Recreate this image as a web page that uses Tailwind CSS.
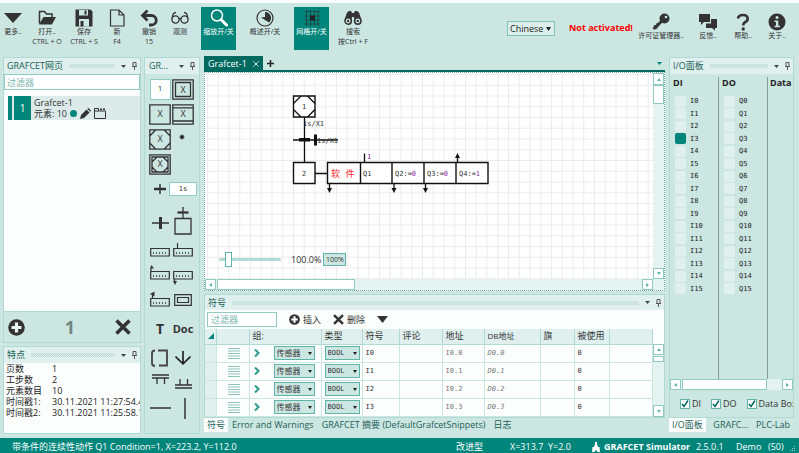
<!DOCTYPE html>
<html lang="zh">

<head>
    <meta charset="UTF-8">
    <meta name="viewport" content="width=device-width, initial-scale=1.0">
    <script src="https://cdn.jsdelivr.net/npm/@tailwindcss/browser@4"></script>
    <title>GRAFCET Simulator</title>
</head>

<body class="h-screen flex flex-col overflow-hidden bg-[#cce6e2] border-t-[3px] border-[#fafdfd] font-['Open_Sans','Noto_Sans_CJK_SC',sans-serif] text-[9px] leading-3 text-[#333]">

    <!-- Toolbar -->
    <header class="h-[54px] shrink-0 flex items-start pt-1 pr-1 text-[7px] leading-[10px] whitespace-nowrap">
        <button class="w-[26px] h-[43px] pt-[2px] flex flex-col items-center">
            <svg class="w-[18px] h-[18px]" viewBox="0 0 18 18"><path d="M0 4h18L9 14z" fill="#333" /></svg>
            <span>更多..</span>
        </button>
        <button class="w-[42px] h-[43px] pt-[2px] flex flex-col items-center">
            <svg class="w-[18px] h-[18px]" viewBox="0 0 18 18"><path d="M1.500 14.500V2.500h5l2 2.500h5.500v3" fill="none" stroke="#333" stroke-width="1.500" /><path d="M5.500 8H18l-4 7.500H1z" fill="#333" /></svg>
            <span>打开..</span>
            <span>CTRL + O</span>
        </button>
        <button class="w-8 h-[43px] pt-[2px] flex flex-col items-center">
            <svg class="w-[18px] h-[18px]" viewBox="0 0 18 18"><path d="M.5.5h15l2 2v15H.5z" fill="#333" /><path d="M4 1h9v5.500H4zM4 10h10v7.500H4z" fill="#cce6e2" /><path d="M9.500 1.500h2v4h-2zM5.500 12h3v5.500h-3z" fill="#333" /></svg>
            <span>保存</span>
            <span>CTRL + S</span>
        </button>
        <button class="w-[34px] h-[43px] pt-[2px] flex flex-col items-center">
            <svg class="w-[18px] h-[18px]" viewBox="0 0 18 18"><path d="M2.500 1h8.500l5 5v11h-13.500zM11 1v5h5" fill="none" stroke="#333" stroke-width="1.200" /></svg>
            <span>新</span>
            <span>F4</span>
        </button>
        <button class="w-[30px] h-[43px] pt-[2px] flex flex-col items-center">
            <svg class="w-[18px] h-[18px]" viewBox="0 0 18 18"><path d="M7.500 1.500L2.500 6.500l5 5M2.500 6.500h9a4.500 4.500 0 0 1 0 9.500H9" fill="none" stroke="#333" stroke-width="2.800" /></svg>
            <span>撤销</span>
            <span>15</span>
        </button>
        <button class="w-8 h-[43px] pt-[2px] mr-[5px] flex flex-col items-center">
            <svg class="w-[18px] h-[18px]" viewBox="0 0 18 18"><g fill="none" stroke="#333" stroke-width="1.300"><circle cx="4.500" cy="10.500" r="3.600" /><circle cx="13.500" cy="10.500" r="3.600" /><path d="M7.800 10q1.200-1 2.400 0M1.200 9.500Q1.500 3.500 5 3.500M16.800 9.500Q16.500 3.500 13 3.500" /></g></svg>
            <span>观测</span>
        </button>
        <button class="w-[35px] h-[43px] pt-[2px] flex flex-col items-center bg-[#00857a] text-white">
            <svg class="w-[18px] h-[18px]" viewBox="0 0 18 18"><circle cx="7" cy="6.500" r="5.500" fill="none" stroke="#fff" stroke-width="1.500" /><path d="M11.500 11l5 5" stroke="#fff" stroke-width="3" stroke-linecap="round" /></svg>
            <span>缩放开/关</span>
        </button>
        <button class="w-[58px] h-[43px] pt-[2px] flex flex-col items-center">
            <svg class="w-[18px] h-[18px]" viewBox="0 0 18 18"><circle cx="9" cy="9" r="8" fill="none" stroke="#333" stroke-width="1.200" /><path d="M9 3a6 6 0 0 1 4 10.500L5 8.500l4-.5z" fill="#333" /></svg>
            <span>概述开/关</span>
        </button>
        <button class="w-[35px] h-[43px] pt-[2px] flex flex-col items-center bg-[#00857a] text-white">
            <svg class="w-[18px] h-[18px]" viewBox="0 0 18 18"><path d="M3.500 1v16M7.500 1v16M11.500 1v16M15 1v16M1.500 2.500H17M1.500 7H17M1.500 11H17M1.500 15H17" stroke="#1d4f4a" stroke-width="1" fill="none" /><path d="M7 6.500h5v5H7z" fill="#222" /></svg>
            <span>网格开/关</span>
        </button>
        <button class="w-12 h-[43px] pt-[2px] flex flex-col items-center">
            <svg class="w-[18px] h-[18px]" viewBox="0 0 18 18"><path d="M3 3.500L5 2h2l1 2h2l1-2h2l2 1.500L17.500 11h-7L10 8H8l-.5 3H.5z" fill="#333" /><g fill="#cce6e2" stroke="#333" stroke-width="1.500"><circle cx="4.200" cy="12" r="3.200" /><circle cx="13.800" cy="12" r="3.200" /></g><circle cx="4.200" cy="12" r="1.200" fill="#333" /><circle cx="13.800" cy="12" r="1.200" fill="#333" /></svg>
            <span>搜索</span>
            <span>按Ctrl + F</span>
        </button>

        <div class="ml-auto flex items-start pt-1">
            <div class="relative mt-[10px]">
                <select aria-label="Language" class="appearance-none w-12 h-[15px] pl-[2px] border border-[#7fc4bb] bg-[#dcefec] text-[9px] leading-3 text-[#222]">
                    <option>Chinese</option>
                </select>
                <svg class="absolute right-1 top-[6px] w-[5px] h-1 pointer-events-none" viewBox="0 0 5 4"><path d="M0 0h5L2.500 4z" fill="#222" /></svg>
            </div>
            <strong class="w-[60px] ml-[14px] mr-1 mt-[11px] text-[9px] leading-3 text-[#fe0000]">Not activated!</strong>
            <button class="w-14 flex flex-col items-center pt-[2px]">
                <svg class="w-[18px] h-[18px]" viewBox="0 0 18 18"><path d="M10.500 7.500L1.500 16" stroke="#333" stroke-width="3" /><path d="M2 12.500l3.500 3M4.500 10.500l2.500 2.500" stroke="#333" stroke-width="1.500" /><circle cx="12.500" cy="5.500" r="5" fill="#333" /><circle cx="14" cy="4" r="1.300" fill="#cce6e2" /></svg>
                <span>许可证管理器..</span>
            </button>
            <button class="w-[38px] flex flex-col items-center pt-[2px]">
                <svg class="w-[18px] h-[18px]" viewBox="0 0 18 18"><path d="M0 1h11v8H5l-3 3V9H0z" fill="#333" /><path d="M12 6h6v9h-2v2.500L13 15H7v-4.500h5z" fill="#333" /></svg>
                <span>反馈..</span>
            </button>
            <button class="w-8 flex flex-col items-center pt-[2px]">
                <svg class="w-[18px] h-[18px]" viewBox="0 0 18 18"><path d="M4 5.500Q4.500 2 9 2t4.700 3.700Q13.700 8 11 9.200 9.200 10 9.200 12.500" fill="none" stroke="#333" stroke-width="2.600" /><circle cx="9.200" cy="16" r="1.700" fill="#333" /></svg>
                <span>帮助..</span>
            </button>
            <button class="w-9 flex flex-col items-center pt-[2px]">
                <svg class="w-[18px] h-[18px]" viewBox="0 0 18 18"><circle cx="9" cy="9" r="8.500" fill="#333" /><circle cx="9" cy="4.500" r="1.500" fill="#cce6e2" /><path d="M6.500 7.500h3.800v5.300H12v1.400H6.500v-1.400H8V9H6.500z" fill="#cce6e2" /></svg>
                <span>关于..</span>
            </button>
        </div>
    </header>

    <main class="flex-1 min-h-0 flex gap-[3px] pl-[3px] pr-[5px] pb-1">

        <!-- Pages and properties -->
        <aside class="w-[138px] shrink-0 flex flex-col">
            <section class="flex-1 min-h-0 flex flex-col border border-[#b2dad4]">
                <div class="h-4 flex items-center gap-[6px] px-[3px] bg-[#dff0ee]">
                    <h2 class="text-[#1c5f58]">GRAFCET网页</h2>
                    <div class="flex-1 h-1 bg-[repeating-conic-gradient(#b9d8d4_0_25%,transparent_0_50%)] bg-[length:2px_2px]"></div>
                    <button aria-label="Menu"><svg class="w-[5px] h-[3px]" viewBox="0 0 5 3"><path d="M0 0h5L2.500 3z" fill="#444" /></svg></button>
                    <button aria-label="Pin"><svg class="w-[5px] h-2" viewBox="0 0 5 8"><path d="M1 .5h3v4H1zM0 4.500h5M2.500 5v3" fill="none" stroke="#555" /></svg></button>
                </div>
                <input type="text" aria-label="过滤器" placeholder="过滤器" class="h-4 px-[2px] border border-[#8fcbc3] bg-white placeholder:text-[#7ab5ad]">
                <div class="flex-1 bg-[#fcfefe] pt-[6px] pl-1">
                    <a href="#" class="h-6 flex items-center bg-[#dcebe9]">
                        <span class="w-1 h-full bg-[#00857a]"></span>
                        <span class="w-[17px] h-full ml-[2px] bg-[#00857a] text-white text-[10px] flex items-center justify-center">1</span>
                        <span class="ml-[3px] leading-[11px]">
                            <span class="block">Grafcet-1</span>
                            <span class="flex items-center gap-[3px]">元素: 10
                                <svg class="w-[7px] h-[7px]" viewBox="0 0 7 7"><circle cx="3.500" cy="3.500" r="3.500" fill="#00857a" /></svg>
                                <svg class="w-[11px] h-[11px]" viewBox="0 0 11 11"><path d="M0 11l1-4 5.500-5.500 3 3L4 10zM7.300.8L8.500 0 11 2.500l-.8 1.200z" fill="#333" /></svg>
                                <svg class="w-3 h-[11px]" viewBox="0 0 12 11"><path d="M.5 3V.5h4V3h7v7.500H.5V3h4" fill="none" stroke="#333" /><path d="M6 .5h2v1.500H6zM9 .5h2v1.500H9z" fill="#333" /></svg>
                            </span>
                        </span>
                    </a>
                </div>
                <div class="h-[31px] flex items-center justify-between px-1 border-t border-[#b2dad4]">
                    <button aria-label="Add page"><svg class="w-[17px] h-[17px]" viewBox="0 0 17 17"><circle cx="8.500" cy="8.500" r="8.300" fill="#333" /><path d="M8.500 3.500v10M3.500 8.500h10" stroke="#e8f4f2" stroke-width="3.200" /></svg></button>
                    <span class="text-[18px] leading-5 font-bold text-[#6f8682]">1</span>
                    <button aria-label="Delete page" class="pr-[5px]"><svg class="w-4 h-4" viewBox="0 0 16 16"><path d="M1.500 1.500l13 13M14.500 1.500l-13 13" stroke="#333" stroke-width="3.600" /></svg></button>
                </div>
            </section>

            <section class="h-[88px] shrink-0 mt-[3px] flex flex-col border border-[#b2dad4] bg-[#fcfefe]">
                <div class="h-4 flex items-center gap-[6px] px-[3px] bg-[#dff0ee]">
                    <h2 class="text-[#1c5f58]">特点</h2>
                    <div class="flex-1 h-1 bg-[repeating-conic-gradient(#b9d8d4_0_25%,transparent_0_50%)] bg-[length:2px_2px]"></div>
                    <button aria-label="Menu"><svg class="w-[5px] h-[3px]" viewBox="0 0 5 3"><path d="M0 0h5L2.500 3z" fill="#444" /></svg></button>
                    <button aria-label="Pin"><svg class="w-[5px] h-2" viewBox="0 0 5 8"><path d="M1 .5h3v4H1zM0 4.500h5M2.500 5v3" fill="none" stroke="#555" /></svg></button>
                </div>
                <dl class="grid grid-cols-[46px_1fr] pl-[2px] leading-[11px] whitespace-nowrap overflow-hidden text-[#222]">
                    <dt>页数</dt><dd>1</dd>
                    <dt>工步数</dt><dd>2</dd>
                    <dt>元素数目</dt><dd>10</dd>
                    <dt>时间戳1:</dt><dd>30.11.2021 11:27:54.4</dd>
                    <dt>时间戳2:</dt><dd>30.11.2021 11:25:58.1</dd>
                </dl>
            </section>
        </aside>

        <!-- Element palette -->
        <aside class="w-14 shrink-0 flex flex-col border border-[#b2dad4]">
            <div class="h-4 flex items-center gap-[6px] px-1 bg-[#dff0ee]">
                <h2 class="flex-1 text-[#1c5f58]">GR...</h2>
                <button aria-label="Menu"><svg class="w-[5px] h-[3px]" viewBox="0 0 5 3"><path d="M0 0h5L2.500 3z" fill="#444" /></svg></button>
                <button aria-label="Pin"><svg class="w-[5px] h-2" viewBox="0 0 5 8"><path d="M1 .5h3v4H1zM0 4.500h5M2.500 5v3" fill="none" stroke="#555" /></svg></button>
            </div>
            <div class="grid grid-cols-[22px_24px] grid-rows-[25px_25px_25px_25px_23px_41px_21px_26px_24px_34px_24px_24px_28px] place-items-center pt-[3px] pl-1 justify-start text-[#333]">
                <input type="text" value="1" aria-label="Step number" class="w-[21px] h-[21px] border border-[#8fcbc3] bg-white text-center text-[8px] pb-1">
                <button><svg class="w-[22px] h-[21px]" viewBox="0 0 22 21"><path d="M.8.8h20.400v19.400H.8zM3.500 3.500h15v14h-15z" fill="none" stroke="#333" stroke-width="1.300" /><text x="11" y="14" text-anchor="middle" font-size="9" fill="#333">X</text></svg></button>
                <button><svg class="w-[22px] h-[21px]" viewBox="0 0 22 21"><path d="M.8.8h20.400v19.400H.8z" fill="none" stroke="#333" stroke-width="1.300" /><text x="11" y="13" text-anchor="middle" font-size="9" fill="#333">X</text></svg></button>
                <button><svg class="w-[22px] h-[21px]" viewBox="0 0 22 21"><path d="M.8.8h20.400v19.400H.8zM.8 3.800h20.400M.8 17h20.400" fill="none" stroke="#333" stroke-width="1.300" /><text x="11" y="13" text-anchor="middle" font-size="9" fill="#333">X</text></svg></button>
                <button><svg class="w-[22px] h-[21px]" viewBox="0 0 22 21"><path d="M.8.8h20.400v19.400H.8zM.8 7l6-6.200M15 .8L21.200 7M.8 14l6 6.200M15 20.200l6.200-6.200" fill="none" stroke="#333" stroke-width="1.300" /><text x="11" y="13" text-anchor="middle" font-size="9" fill="#333">X</text></svg></button>
                <button><svg class="w-[22px] h-[21px]" viewBox="0 0 22 21"><path d="M10 5.500v5M7.800 6.800l4.400 2.400M12.200 6.800L7.800 9.200" stroke="#222" stroke-width="1.300" /></svg></button>
                <button><svg class="w-[22px] h-[21px]" viewBox="0 0 22 21"><path d="M.8.8h20.400v19.400H.8zM3 3h16v15H3zM3 8l5-5M14 3l5 5M3 13l5 5M14 18l5-5" fill="none" stroke="#333" stroke-width="1.300" /><text x="11" y="13" text-anchor="middle" font-size="9" fill="#333">X</text></svg></button>
                <span></span>
                <button><svg class="w-3 h-3" viewBox="0 0 12 12"><path d="M6 1v10" stroke="#333" stroke-width="1.500" /><path d="M0 6h12" stroke="#333" stroke-width="2.500" /></svg></button>
                <input type="text" value="1s" aria-label="Transition" class="w-7 h-[14px] border border-[#8fcbc3] bg-white text-center text-[7px] font-['DejaVu_Sans_Mono',monospace]">
                <button><svg class="w-[17px] h-3 mt-1" viewBox="0 0 17 12"><path d="M0 6h17" stroke="#333" stroke-width="1.500" /><path d="M8.500 0v12" stroke="#333" stroke-width="3" /></svg></button>
                <button><svg class="w-[18px] h-7" viewBox="0 0 18 28"><path d="M1 11.500h16v15.500H1zM9 0v11" fill="none" stroke="#333" stroke-width="1.300" /><path d="M3.500 5.500h11" stroke="#333" stroke-width="2.300" /></svg></button>
                <button><svg class="w-5 h-[18px]" viewBox="0 0 20 18"><path d="M.7 5.500h18.600v7.500H.7z" fill="none" stroke="#333" stroke-width="1.200" /><path d="M3 10h14" stroke="#333" stroke-width="1.500" stroke-dasharray="1 2" /></svg></button>
                <button><svg class="w-5 h-[18px]" viewBox="0 0 20 18"><path d="M.7 5.500h18.600v7.500H.7zM4.500 0v5" fill="none" stroke="#333" stroke-width="1.200" /><path d="M3 10h14" stroke="#333" stroke-width="1.500" stroke-dasharray="1 2" /></svg></button>
                <button><svg class="w-5 h-5" viewBox="0 0 20 20"><path d="M.7 6.500h18.600V14H.7zM1 6V3" fill="none" stroke="#333" stroke-width="1.200" /><path d="M0 3.500L1.500 0 4 3.500z" fill="#333" /><path d="M3 11h14" stroke="#333" stroke-width="1.500" stroke-dasharray="1 2" /></svg></button>
                <button><svg class="w-5 h-5" viewBox="0 0 20 20"><path d="M.7 6.500h18.600V14H.7zM1.500 14v3" fill="none" stroke="#333" stroke-width="1.200" /><path d="M0 16h4l-2 4z" fill="#333" /><path d="M3 11h14" stroke="#333" stroke-width="1.500" stroke-dasharray="1 2" /></svg></button>
                <button><svg class="w-5 h-[18px]" viewBox="0 0 20 18"><path d="M.7 7.500h18.600V15H.7zM2.500 7V3" fill="none" stroke="#333" stroke-width="1.200" /><path d="M0 3l4.500-2.500v5z" fill="#333" /><path d="M3 12h14" stroke="#333" stroke-width="1.500" stroke-dasharray="1 2" /></svg></button>
                <button><svg class="w-[18px] h-3" viewBox="0 0 18 12"><path d="M.7.7h16.600v10.600H.7zM3.500 3.500h11v5h-11z" fill="none" stroke="#333" stroke-width="1.200" /></svg></button>
                <button class="text-[14px] leading-5 font-bold">T</button>
                <button class="text-[11px] leading-5 font-bold">Doc</button>
                <button><svg class="w-[18px] h-[18px]" viewBox="0 0 18 18"><path d="M4 1.500Q1 1.500 1 4v10q0 3 3 3M7 1.500h9v15H8" fill="none" stroke="#444" stroke-width="1.800" /></svg></button>
                <button><svg class="w-4 h-[14px]" viewBox="0 0 16 14"><path d="M8 0v12.500M.5 5.500L8 12.800l7.500-7.300" fill="none" stroke="#222" stroke-width="1.700" /></svg></button>
                <button class="self-start"><svg class="w-[17px] h-[10px] mt-1" viewBox="0 0 17 10"><path d="M0 1h17M0 4h17M5 4v6M12.500 4v6" fill="none" stroke="#333" stroke-width="1.300" /></svg></button>
                <button><svg class="w-[17px] h-[10px] mt-1" viewBox="0 0 17 10"><path d="M0 6h17M0 9h17M5 0v6M12.500 0v6" fill="none" stroke="#333" stroke-width="1.300" /></svg></button>
                <button><svg class="w-[21px] h-[2px]" viewBox="0 0 21 2"><path d="M0 1h21" stroke="#333" stroke-width="1.500" /></svg></button>
                <button><svg class="w-[8px] h-[21px]" viewBox="0 0 8 21"><path d="M6 0v21" stroke="#333" stroke-width="1.500" /></svg></button>
            </div>
        </aside>

        <!-- Editor and symbols -->
        <div class="flex-1 min-w-0 mx-[1px] flex flex-col">
            <div class="h-[15px] shrink-0 flex items-center border-b-2 border-[#00695f] text-[#1c5f58]">
                <div class="h-[15px] px-1 flex items-center gap-[6px] bg-[#00695f] text-white">
                    <a href="#">Grafcet-1</a>
                    <button aria-label="Close"><svg class="w-[6px] h-[6px]" viewBox="0 0 6 6"><path d="M.5.5l5 5M5.500.5l-5 5" stroke="#cce6e2" /></svg></button>
                </div>
                <button aria-label="New tab" class="ml-1"><svg class="w-[7px] h-[7px]" viewBox="0 0 7 7"><path d="M3.500 0v7M0 3.500h7" stroke="#222" stroke-width="1.500" /></svg></button>
                <button aria-label="Tabs" class="ml-auto mr-[3px]"><svg class="w-[5px] h-[3px]" viewBox="0 0 5 3"><path d="M0 0h5L2.500 3z" fill="#00857a" /></svg></button>
            </div>

            <div class="flex-1 min-h-0 flex flex-col border border-dotted border-[#7fa8a3] bg-white">
                <div class="flex-1 min-h-0 flex">
                    <div class="relative flex-1 min-w-0">
                        <svg class="w-full h-full" font-family="'DejaVu Sans Mono', 'Noto Sans CJK SC', monospace" font-size="7">
                            <defs>
                                <pattern id="grid" x="2" y="1" width="10.750" height="10.750" patternUnits="userSpaceOnUse">
                                    <path d="M.5 0v10.750M0 .5h10.750" stroke="#ececec" fill="none" />
                                </pattern>
                            </defs>
                            <rect width="100%" height="100%" fill="url(#grid)" />
                            <g fill="#fff" stroke="#111" stroke-width="1.400">
                                <path d="M88.500 23h21.500v21H88.500z" />
                                <path d="M88.500 89.500h21.500v21H88.500z" />
                                <path d="M122.500 89.500h160.500v21H122.500zM155.500 89.500v21M187 89.500v21M219 89.500v21M251 89.500v21" />
                            </g>
                            <!-- links, transitions and step corners -->
                            <g fill="none" stroke="#111" stroke-width="1.300">
                                <path d="M88.500 30.500l7.500-7.500M102.500 23l7.500 7.500M88.500 36.500l7.500 7.500M102.500 44l7.500-7.500" />
                                <path d="M99.500 44v45.500M88 67h45M110 100.500h12.500" />
                                <path d="M159.500 80.500v9M124.500 110.500v5M189 110.500v5M220.500 110.500v5M252.500 84v5.500" />
                            </g>
                            <path d="M94 65h11v3.500H94zM109 61.500h3v11h-3zM122 115h5l-2.500 5zM186.500 115h5l-2.500 5zM218 115h5l-2.500 5zM250 85h5l-2.500-5z" fill="#111" />
                            <g fill="#333">
                                <text x="97" y="36">1</text>
                                <text x="97" y="103">2</text>
                                <text x="98" y="53">1s/X1</text>
                                <text x="112" y="70">1s/X1</text>
                                <text x="158" y="103">Q1</text>
                                <text x="190" y="103">Q2:=<tspan fill="#912c9c">0</tspan></text>
                                <text x="222" y="103">Q3:=<tspan fill="#912c9c">0</tspan></text>
                                <text x="254" y="103">Q4:=<tspan fill="#912c9c">1</tspan></text>
                                <text x="162" y="86" fill="#912c9c">1</text>
                                <text x="126" y="103.500" font-size="9" fill="#fe2020">软 件</text>
                            </g>
                        </svg>
                        <!-- zoom controls floating over the sheet -->
                        <div class="absolute left-[14px] bottom-3 flex items-center text-[#333]">
                            <input type="range" min="0" max="100" value="11" aria-label="Zoom" class="appearance-none w-[62px] h-[15px] bg-transparent [&::-webkit-slider-runnable-track]:h-[3px] [&::-webkit-slider-runnable-track]:rounded-full [&::-webkit-slider-runnable-track]:bg-[#b2dad4] [&::-webkit-slider-thumb]:appearance-none [&::-webkit-slider-thumb]:w-[7px] [&::-webkit-slider-thumb]:h-[15px] [&::-webkit-slider-thumb]:-mt-[6px] [&::-webkit-slider-thumb]:bg-white [&::-webkit-slider-thumb]:border [&::-webkit-slider-thumb]:border-solid [&::-webkit-slider-thumb]:border-[#5fb3a9]">
                            <span class="ml-[10px] mr-[2px]">100.0%</span>
                            <button class="w-[23px] h-[13px] border border-[#5fb3a9] bg-[#cce6e2] text-[7px] leading-[10px]">100%</button>
                        </div>
                    </div>
                    <div class="w-[11px] flex flex-col bg-[#e4f2f0]">
                        <button aria-label="Up" class="h-3 flex items-center justify-center border border-[#8fcbc3] bg-white"><svg class="w-1 h-[3px]" viewBox="0 0 4 3"><path d="M0 3h4L2 0z" fill="#5fb3a9" /></svg></button>
                        <div class="h-[19px] border border-[#8fcbc3] bg-white"></div>
                        <button aria-label="Down" class="h-[11px] mt-auto flex items-center justify-center border border-[#8fcbc3] bg-white"><svg class="w-1 h-[3px]" viewBox="0 0 4 3"><path d="M0 0h4L2 3z" fill="#5fb3a9" /></svg></button>
                    </div>
                </div>
                <div class="h-[11px] flex bg-[#e4f2f0] pr-[11px]">
                    <button aria-label="Left" class="w-[11px] flex items-center justify-center border border-[#8fcbc3] bg-white"><svg class="w-[3px] h-1" viewBox="0 0 3 4"><path d="M3 0v4L0 2z" fill="#5fb3a9" /></svg></button>
                    <div class="w-[138px] ml-[1px] border border-[#8fcbc3] bg-white"></div>
                    <button aria-label="Right" class="w-[11px] ml-auto flex items-center justify-center border border-[#8fcbc3] bg-white"><svg class="w-[3px] h-1" viewBox="0 0 3 4"><path d="M0 0v4l3-2z" fill="#5fb3a9" /></svg></button>
                </div>
            </div>

            <section class="h-[124px] shrink-0 mt-[3px] flex flex-col border border-[#b2dad4] bg-[#fcfefe]">
                <div class="h-[15px] shrink-0 flex items-center gap-[6px] px-[3px] bg-[#dff0ee]">
                    <h2 class="text-[#1c5f58]">符号</h2>
                    <div class="flex-1 h-1 bg-[repeating-conic-gradient(#b9d8d4_0_25%,transparent_0_50%)] bg-[length:2px_2px]"></div>
                    <button aria-label="Menu"><svg class="w-[5px] h-[3px]" viewBox="0 0 5 3"><path d="M0 0h5L2.500 3z" fill="#444" /></svg></button>
                    <button aria-label="Pin"><svg class="w-[5px] h-2" viewBox="0 0 5 8"><path d="M1 .5h3v4H1zM0 4.500h5M2.500 5v3" fill="none" stroke="#555" /></svg></button>
                </div>
                <div class="h-[19px] shrink-0 flex items-center px-[2px]">
                    <input type="text" aria-label="过滤器" placeholder="过滤器" class="w-[70px] h-[15px] px-[3px] border border-[#8fcbc3] bg-white placeholder:text-[#7ab5ad]">
                    <button class="flex items-center gap-[3px] ml-3"><svg class="w-[11px] h-[11px]" viewBox="0 0 17 17"><circle cx="8.500" cy="8.500" r="8.300" fill="#333" /><path d="M8.500 3.500v10M3.500 8.500h10" stroke="#fff" stroke-width="3.200" /></svg>插入</button>
                    <button class="flex items-center gap-[3px] ml-3"><svg class="w-[11px] h-[11px]" viewBox="0 0 16 16"><path d="M1.500 1.500l13 13M14.500 1.500l-13 13" stroke="#333" stroke-width="3.600" /></svg>删除</button>
                    <button aria-label="More" class="ml-3"><svg class="w-[11px] h-[7px]" viewBox="0 0 11 7"><path d="M0 0h11L5.500 7z" fill="#333" /></svg></button>
                </div>
                <div class="flex-1 min-h-0 flex">
                    <table class="flex-1 w-full table-fixed border-collapse text-left h-fit">
                        <colgroup>
                            <col class="w-[11px]"><col class="w-[33px]"><col class="w-[72px]"><col class="w-[41px]"><col class="w-[37px]"><col class="w-[43px]"><col class="w-[42px]"><col class="w-[56px]"><col class="w-[34px]"><col class="w-[35px]"><col>
                        </colgroup>
                        <thead>
                            <tr class="h-[15px] bg-[#dff0ee] [&>th]:font-normal [&>th]:border-r [&>th]:border-b [&>th]:border-[#b2dad4] [&>th]:py-0 [&>th]:pl-[3px] [&>th]:whitespace-nowrap">
                                <th><svg class="w-[6px] h-[6px]" viewBox="0 0 6 6"><path d="M6 0v6H0z" fill="#00857a" /></svg></th>
                                <th></th>
                                <th>组:</th>
                                <th>类型</th>
                                <th>符号</th>
                                <th>评论</th>
                                <th>地址</th>
                                <th><span class="text-[8px]">DB地址</span></th>
                                <th>旗</th>
                                <th>被使用</th>
                                <th></th>
                            </tr>
                        </thead>
                        <tbody id="symbol-rows"></tbody>
                    </table>
                    <div class="w-[11px] mt-[15px] flex flex-col bg-[#e4f2f0]">
                        <button aria-label="Up" class="h-[11px] flex items-center justify-center border border-[#8fcbc3] bg-white"><svg class="w-1 h-[3px]" viewBox="0 0 4 3"><path d="M0 3h4L2 0z" fill="#5fb3a9" /></svg></button>
                        <div class="h-[6px] mt-[1px] border border-[#8fcbc3] bg-white"></div>
                        <button aria-label="Down" class="h-3 mt-auto flex items-center justify-center border border-[#8fcbc3] bg-white"><svg class="w-1 h-[3px]" viewBox="0 0 4 3"><path d="M0 0h4L2 3z" fill="#5fb3a9" /></svg></button>
                    </div>
                </div>
            </section>
            <nav class="h-[14px] mb-[2px] shrink-0 flex items-center gap-2 text-[#1c5f58] whitespace-nowrap">
                <a href="#" class="h-full flex items-center px-[3px] -mr-1 bg-[#fcfefe]">符号</a>
                <a href="#">Error and Warnings</a>
                <a href="#">GRAFCET 摘要 (DefaultGrafcetSnippets)</a>
                <a href="#">日志</a>
            </nav>
        </div>

        <!-- I/O panel -->
        <aside class="w-[125px] shrink-0 flex flex-col">
            <section class="flex-1 min-h-0 flex flex-col border border-[#b2dad4]">
                <div class="h-4 shrink-0 flex items-center gap-[6px] px-[3px] bg-[#dff0ee]">
                    <h2 class="text-[#1c5f58]">I/O面板</h2>
                    <div class="flex-1 h-1 bg-[repeating-conic-gradient(#b9d8d4_0_25%,transparent_0_50%)] bg-[length:2px_2px]"></div>
                    <button aria-label="Menu"><svg class="w-[5px] h-[3px]" viewBox="0 0 5 3"><path d="M0 0h5L2.500 3z" fill="#444" /></svg></button>
                    <button aria-label="Pin"><svg class="w-[5px] h-2" viewBox="0 0 5 8"><path d="M1 .5h3v4H1zM0 4.500h5M2.500 5v3" fill="none" stroke="#555" /></svg></button>
                </div>
                <div class="flex-1 min-h-0 flex pt-[3px] text-[#222] overflow-hidden">
                    <div class="w-[49px] shrink-0 pl-[3px] border-r border-[#8a9b99]">
                        <h3 class="h-[18px] font-bold">DI</h3>
                        <div id="inputs" class="h-[200px] pl-[2px] grid grid-rows-16"></div>
                    </div>
                    <div class="w-[49px] shrink-0 pl-[3px] border-r border-[#8a9b99]">
                        <h3 class="h-[18px] font-bold">DO</h3>
                        <div id="outputs" class="h-[200px] pl-[2px] grid grid-rows-16"></div>
                    </div>
                    <h3 class="pl-[2px] font-bold whitespace-nowrap">Data B</h3>
                </div>
                <div class="h-[11px] shrink-0 flex bg-[#e4f2f0]">
                    <button aria-label="Left" class="w-[11px] flex items-center justify-center border border-[#8fcbc3] bg-white"><svg class="w-[3px] h-1" viewBox="0 0 3 4"><path d="M3 0v4L0 2z" fill="#5fb3a9" /></svg></button>
                    <div class="w-[85px] ml-[1px] border border-[#8fcbc3] bg-white"></div>
                    <button aria-label="Right" class="w-[11px] ml-auto flex items-center justify-center border border-[#8fcbc3] bg-white"><svg class="w-[3px] h-1" viewBox="0 0 3 4"><path d="M0 0v4l3-2z" fill="#5fb3a9" /></svg></button>
                </div>
                <div class="h-[27px] shrink-0 flex items-center gap-[10px] pl-[10px] whitespace-nowrap overflow-hidden">
                    <label class="flex items-center gap-[2px]"><input type="checkbox" checked class="peer appearance-none w-[10px] h-[10px] border border-[#5fb3a9] bg-white"><svg class="w-2 h-2 -ml-[11px] mr-[1px] invisible peer-checked:visible" viewBox="0 0 8 8"><path d="M1 4l2 2.500L7 .5" fill="none" stroke="#00695f" stroke-width="1.500" /></svg>DI</label>
                    <label class="flex items-center gap-[2px]"><input type="checkbox" checked class="peer appearance-none w-[10px] h-[10px] border border-[#5fb3a9] bg-white"><svg class="w-2 h-2 -ml-[11px] mr-[1px] invisible peer-checked:visible" viewBox="0 0 8 8"><path d="M1 4l2 2.500L7 .5" fill="none" stroke="#00695f" stroke-width="1.500" /></svg>DO</label>
                    <label class="flex items-center gap-[2px]"><input type="checkbox" checked class="peer appearance-none w-[10px] h-[10px] border border-[#5fb3a9] bg-white"><svg class="w-2 h-2 -ml-[11px] mr-[1px] invisible peer-checked:visible" viewBox="0 0 8 8"><path d="M1 4l2 2.500L7 .5" fill="none" stroke="#00695f" stroke-width="1.500" /></svg>Data Box</label>
                </div>
            </section>
            <nav class="h-[14px] mb-[2px] shrink-0 flex items-center justify-between pr-1 text-[#1c5f58] whitespace-nowrap">
                <a href="#" class="h-full flex items-center px-[3px] bg-[#fcfefe]">I/O面板</a>
                <a href="#">GRAFC...</a>
                <a href="#">PLC-Lab</a>
            </nav>
        </aside>
    </main>

    <!-- Status bar -->
    <footer class="h-[15px] shrink-0 flex items-center pt-[2px] pl-3 pr-[3px] bg-[#00857a] text-white whitespace-nowrap">
        <span class="mr-auto">带条件的连续性动作 Q1 Condition=1, X=223.2, Y=112.0</span>
        <span class="w-[54px]">改进型</span>
        <span class="w-[82px]">X=313.7&nbsp; Y=2.0</span>
        <svg class="w-2 h-[10px] mr-1" viewBox="0 0 8 10"><path d="M3 0h2v2l1 3h1.500L8 10H5.500L4 7.500 2.500 10H0l.5-5H2l1-3z" fill="#fff" /></svg>
        <strong class="w-[92px]">GRAFCET Simulator</strong>
        <span class="w-[40px]">2.5.0.1</span>
        <span class="w-8">Demo</span>
        <span class="w-[22px]">(50)</span>
        <svg class="w-[6px] h-[6px] self-end mb-[1px]" viewBox="0 0 6 6"><path d="M4 0h1v1H4zM2 2h1v1H2zM4 2h1v1H4zM0 4h1v1H0zM2 4h1v1H2zM4 4h1v1H4z" fill="#9fd0ca" /></svg>
    </footer>

    <script>
        // Symbol table
        const rows = document.getElementById('symbol-rows');
        for (let i = 0; i < 4; i++) {
            rows.insertAdjacentHTML('beforeend', `
                <tr class="h-[18px] font-['DejaVu_Sans_Mono',monospace] text-[7px] [&>td]:border-r [&>td]:border-b [&>td]:border-[#cce6e2] [&>td]:p-0 [&>td]:pl-[3px]">
                    <td class="bg-[#dff0ee]"></td>
                    <td><svg class="w-3 h-[11px] mx-auto" viewBox="0 0 12 11"><path d="M0 .5h12M0 3h12M0 5.500h12M0 8h12M0 10.500h12" stroke="#8fc4bd" /></svg></td>
                    <td>
                        <div class="flex items-center gap-[14px] pl-[1px]">
                            <button aria-label="Expand"><svg class="w-[6px] h-2" viewBox="0 0 6 8"><path d="M1 .5L4.500 4 1 7.500" fill="none" stroke="#2a9a8f" stroke-width="2" /></svg></button>
                            <div class="relative">
                                <select aria-label="组" class="appearance-none w-[41px] h-[14px] pl-[2px] border border-[#5fb3a9] bg-[#cce6e2] font-['Open_Sans','Noto_Sans_CJK_SC',sans-serif] text-[8px] leading-[11px]"><option>传感器</option></select>
                                <svg class="absolute right-[3px] top-[6px] w-1 h-[3px] pointer-events-none" viewBox="0 0 4 3"><path d="M0 0h4L2 3z" fill="#222" /></svg>
                            </div>
                        </div>
                    </td>
                    <td>
                        <div class="relative w-[35px]">
                            <select aria-label="类型" class="appearance-none w-[35px] h-[14px] pl-[2px] border border-[#5fb3a9] bg-[#cce6e2] text-[7px] leading-[11px]"><option>BOOL</option></select>
                            <svg class="absolute right-[3px] top-[6px] w-1 h-[3px] pointer-events-none" viewBox="0 0 4 3"><path d="M0 0h4L2 3z" fill="#222" /></svg>
                        </div>
                    </td>
                    <td>I${i}</td>
                    <td></td>
                    <td class="text-[#777]">I0.${i}</td>
                    <td class="text-[#777] italic">D0.${i}</td>
                    <td></td>
                    <td>0</td>
                    <td></td>
                </tr>`);
        }

        // Digital inputs and outputs
        function fillList(id, prefix, on) {
            const list = document.getElementById(id);
            for (let i = 0; i < 16; i++) {
                list.insertAdjacentHTML('beforeend', `
                    <label class="flex items-center gap-1 font-['DejaVu_Sans_Mono',monospace] text-[7px]">
                        <input type="checkbox" ${i === on ? 'checked' : ''} class="appearance-none w-[11px] h-[11px] rounded-[2px] bg-[#e0f0ee] checked:bg-[#00857a]">${prefix}${i}
                    </label>`);
            }
        }
        fillList('inputs', 'I', 3);
        fillList('outputs', 'Q', -1);
    </script>
</body>

</html>
